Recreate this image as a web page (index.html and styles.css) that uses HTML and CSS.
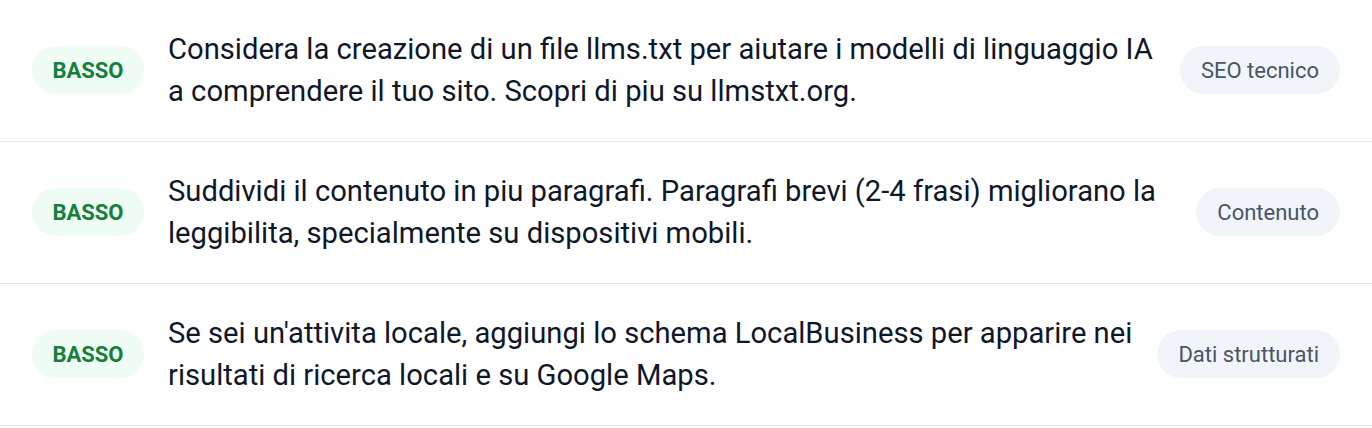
FILE: index.html
```html
<!DOCTYPE html>
<html lang="it">
<head>
  <meta charset="UTF-8">
  <meta name="viewport" content="width=device-width, initial-scale=1.0">
  <title>Suggerimenti</title>
  <link rel="stylesheet" href="styles.css">
</head>
<body>
  <!-- Elenco dei suggerimenti -->
  <ul class="tips">
    <li class="tip">
      <span class="level">BASSO</span>
      <p class="text">Considera la creazione di un file llms.txt per aiutare i modelli di linguaggio IA a comprendere il tuo sito. Scopri di piu su llmstxt.org.</p>
      <span class="tag">SEO tecnico</span>
    </li>
    <li class="tip">
      <span class="level">BASSO</span>
      <p class="text">Suddividi il contenuto in piu paragrafi. Paragrafi brevi (2-4 frasi) migliorano la leggibilita, specialmente su dispositivi mobili.</p>
      <span class="tag">Contenuto</span>
    </li>
    <li class="tip">
      <span class="level">BASSO</span>
      <p class="text">Se sei un'attivita locale, aggiungi lo schema LocalBusiness per apparire nei risultati di ricerca locali e su Google Maps.</p>
      <span class="tag">Dati strutturati</span>
    </li>
  </ul>
</body>
</html>
```

FILE: styles.css
```css
body {
  margin: 0;
  background: #ffffff;
  font-family: Roboto, "Liberation Sans", sans-serif;
  color: #0f172a;
}

.tips {
  list-style: none;
  margin: 0;
  padding: 0;
}

/* Una riga: livello, testo, categoria */
.tip {
  display: flex;
  align-items: center;
  gap: 24px;
  padding: 28px 32px 29px;
  border-bottom: 1px solid #e5e7eb;
}

.level {
  flex: none;
  width: 112px;
  height: 48px;
  display: flex;
  align-items: center;
  justify-content: center;
  border-radius: 24px;
  background: #effcf3;
  color: #15803d;
  font-size: 22px;
  font-weight: 700;
}

.text {
  flex: 1;
  margin: 0;
  font-size: 29.2px;
  line-height: 42px;
}

.tag {
  flex: none;
  height: 48px;
  padding: 0 21px;
  display: flex;
  align-items: center;
  border-radius: 24px;
  background: #f1f5f9;
  color: #475569;
  font-size: 22px;
}
```
